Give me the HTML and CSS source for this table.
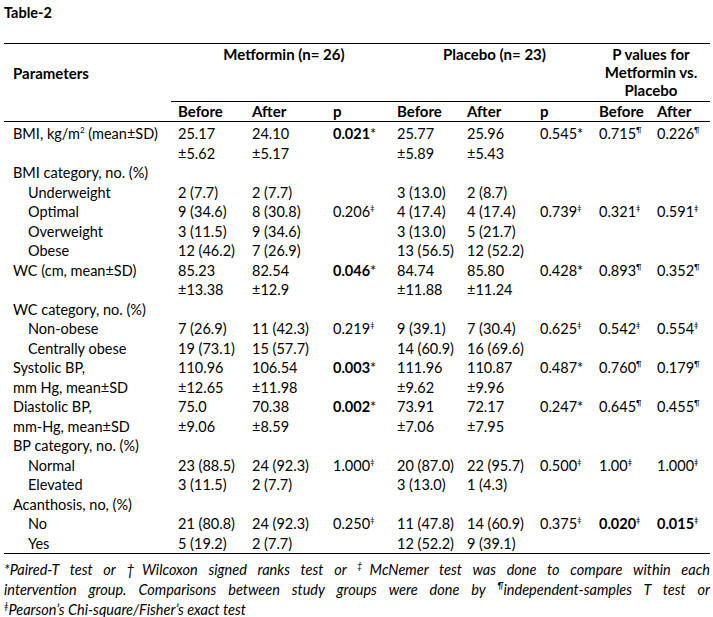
FILE: index.html
```html
<!DOCTYPE html>
<html>
<head>
<meta charset="utf-8">
<link rel="stylesheet" href="styles.css">
</head>
<body>
<div class="page">
  <div class="title">Table-2</div>
  <table class="tbl">
    <colgroup>
      <col class="c-param"><col class="c-mb"><col class="c-ma"><col class="c-mp">
      <col class="c-pb"><col class="c-pa"><col class="c-pp"><col class="c-vb"><col class="c-va">
    </colgroup>
    <thead>
      <tr class="h1">
        <th class="param-h" rowspan="2">Parameters</th>
        <th class="grp" colspan="3">Metformin (n= 26)</th>
        <th class="grp" colspan="3">Placebo (n= 23)</th>
        <th class="grp" colspan="2">P values for Metformin vs. Placebo</th>
      </tr>
      <tr class="h2">
        <th>Before</th><th>After</th><th>p</th>
        <th>Before</th><th>After</th><th>p</th>
        <th>Before</th><th>After</th>
      </tr>
    </thead>
    <tbody>
      <tr><td class="pl">BMI, kg/m<sup>2</sup> (mean±SD)</td><td>25.17</td><td>24.10</td><td><b>0.021</b>*</td><td>25.77</td><td>25.96</td><td>0.545*</td><td>0.715<sup>¶</sup></td><td>0.226<sup>¶</sup></td></tr>
      <tr><td class="pl"></td><td>±5.62</td><td>±5.17</td><td></td><td>±5.89</td><td>±5.43</td><td></td><td></td><td></td></tr>
      <tr><td class="pl">BMI category, no. (%)</td><td></td><td></td><td></td><td></td><td></td><td></td><td></td><td></td></tr>
      <tr><td class="pl ind">Underweight</td><td>2 (7.7)</td><td>2 (7.7)</td><td></td><td>3 (13.0)</td><td>2 (8.7)</td><td></td><td></td><td></td></tr>
      <tr><td class="pl ind">Optimal</td><td>9 (34.6)</td><td>8 (30.8)</td><td>0.206<sup>‡</sup></td><td>4 (17.4)</td><td>4 (17.4)</td><td>0.739<sup>‡</sup></td><td>0.321<sup>ǂ</sup></td><td>0.591<sup>ǂ</sup></td></tr>
      <tr><td class="pl ind">Overweight</td><td>3 (11.5)</td><td>9 (34.6)</td><td></td><td>3 (13.0)</td><td>5 (21.7)</td><td></td><td></td><td></td></tr>
      <tr><td class="pl ind">Obese</td><td>12 (46.2)</td><td>7 (26.9)</td><td></td><td>13 (56.5)</td><td>12 (52.2)</td><td></td><td></td><td></td></tr>
      <tr><td class="pl">WC (cm, mean±SD)</td><td>85.23</td><td>82.54</td><td><b>0.046</b>*</td><td>84.74</td><td>85.80</td><td>0.428*</td><td>0.893<sup>¶</sup></td><td>0.352<sup>¶</sup></td></tr>
      <tr><td class="pl"></td><td>±13.38</td><td>±12.9</td><td></td><td>±11.88</td><td>±11.24</td><td></td><td></td><td></td></tr>
      <tr><td class="pl">WC category, no. (%)</td><td></td><td></td><td></td><td></td><td></td><td></td><td></td><td></td></tr>
      <tr><td class="pl ind">Non-obese</td><td>7 (26.9)</td><td>11 (42.3)</td><td>0.219<sup>‡</sup></td><td>9 (39.1)</td><td>7 (30.4)</td><td>0.625<sup>‡</sup></td><td>0.542<sup>ǂ</sup></td><td>0.554<sup>ǂ</sup></td></tr>
      <tr><td class="pl ind">Centrally obese</td><td>19 (73.1)</td><td>15 (57.7)</td><td></td><td>14 (60.9)</td><td>16 (69.6)</td><td></td><td></td><td></td></tr>
      <tr><td class="pl">Systolic BP,</td><td>110.96</td><td>106.54</td><td><b>0.003</b>*</td><td>111.96</td><td>110.87</td><td>0.487*</td><td>0.760<sup>¶</sup></td><td>0.179<sup>¶</sup></td></tr>
      <tr><td class="pl">mm Hg, mean±SD</td><td>±12.65</td><td>±11.98</td><td></td><td>±9.62</td><td>±9.96</td><td></td><td></td><td></td></tr>
      <tr><td class="pl">Diastolic BP,</td><td>75.0</td><td>70.38</td><td><b>0.002</b>*</td><td>73.91</td><td>72.17</td><td>0.247*</td><td>0.645<sup>¶</sup></td><td>0.455<sup>¶</sup></td></tr>
      <tr><td class="pl">mm-Hg, mean±SD</td><td>±9.06</td><td>±8.59</td><td></td><td>±7.06</td><td>±7.95</td><td></td><td></td><td></td></tr>
      <tr><td class="pl">BP category, no. (%)</td><td></td><td></td><td></td><td></td><td></td><td></td><td></td><td></td></tr>
      <tr><td class="pl ind">Normal</td><td>23 (88.5)</td><td>24 (92.3)</td><td>1.000<sup>‡</sup></td><td>20 (87.0)</td><td>22 (95.7)</td><td>0.500<sup>‡</sup></td><td>1.00<sup>ǂ</sup></td><td>1.000<sup>ǂ</sup></td></tr>
      <tr><td class="pl ind">Elevated</td><td>3 (11.5)</td><td>2 (7.7)</td><td></td><td>3 (13.0)</td><td>1 (4.3)</td><td></td><td></td><td></td></tr>
      <tr><td class="pl">Acanthosis, no, (%)</td><td></td><td></td><td></td><td></td><td></td><td></td><td></td><td></td></tr>
      <tr><td class="pl ind2">No</td><td>21 (80.8)</td><td>24 (92.3)</td><td>0.250<sup>‡</sup></td><td>11 (47.8)</td><td>14 (60.9)</td><td>0.375<sup>‡</sup></td><td><b>0.020</b><sup>ǂ</sup></td><td><b>0.015</b><sup>ǂ</sup></td></tr>
      <tr class="last"><td class="pl ind2">Yes</td><td>5 (19.2)</td><td>2 (7.7)</td><td></td><td>12 (52.2)</td><td>9 (39.1)</td><td></td><td></td><td></td></tr>
    </tbody>
  </table>
  <div class="note">
    <span class="nl just">*Paired-T test or †Wilcoxon signed ranks test or <sup>‡</sup>McNemer test was done to compare within each</span>
    <span class="nl just">intervention group. Comparisons between study groups were done by <sup>¶</sup>independent-samples T test or</span>
    <span class="nl"><sup>ǂ</sup>Pearson’s Chi-square/Fisher’s exact test</span>
  </div>
</div>
</body>
</html>
```

FILE: styles.css
```css
html, body {
  margin: 0;
  padding: 0;
  background: #ffffff;
}
body {
  font-family: Lato, "Open Sans", sans-serif;
  font-size: 14.5px;
  color: #000000;
}
.page {
  padding: 4px 3px 0 4px;
  width: 706px;
}
.title {
  font-weight: bold;
  font-size: 14.5px;
  line-height: 18px;
  height: 39px;
}
.tbl {
  border-collapse: collapse;
  table-layout: fixed;
  width: 706px;
}
.c-param { width: 167px; }
.c-mb { width: 74px; }
.c-ma { width: 81px; }
.c-mp { width: 64px; }
.c-pb { width: 70px; }
.c-pa { width: 73px; }
.c-pp { width: 59px; }
.c-vb { width: 58px; }
.c-va { width: 60px; }

.tbl th, .tbl td {
  padding: 0 0 0 7px;
  text-align: left;
  white-space: nowrap;
  font-weight: normal;
}
.tbl thead th {
  font-weight: bold;
  font-size: 15px;
}
.h1 th {
  border-top: 1px solid #000;
  border-bottom: 1px solid #000;
  height: 58px;
  vertical-align: top;
  padding-top: 1px;
  line-height: 18px;
  text-align: center;
  box-sizing: border-box;
}
.h1 th.param-h {
  text-align: left;
  vertical-align: top;
  padding-left: 9px;
  padding-top: 20px;
  border-bottom: 1px solid #000;
}
.h1 th.grp:last-child {
  white-space: normal;
  padding-left: 0;
}
.h2 th {
  height: 19px;
  line-height: 19px;
  border-bottom: 1px solid #000;
}
.tbl tbody td {
  height: 19.5px;
  line-height: 19.5px;
  padding-top: 0;
  padding-bottom: 0;
}
.tbl tbody tr:first-child td { padding-top: 2px; }
.tbl td.pl { padding-left: 9px; }
.tbl td.ind { padding-left: 24px; }
.tbl td.ind2 { padding-left: 24px; }
.tbl tr.last td { border-bottom: 1px solid #000; }
sup {
  font-size: 8px;
  line-height: 0;
  vertical-align: 6px;
}
.note sup {
  font-size: 9px;
}
.note {
  margin: 6px 0 0 0;
  font-style: italic;
  font-size: 14.5px;
  line-height: 20px;
}
.nl {
  display: block;
  white-space: nowrap;
}
.nl.just {
  text-align: justify;
  text-align-last: justify;
  white-space: normal;
}
```
